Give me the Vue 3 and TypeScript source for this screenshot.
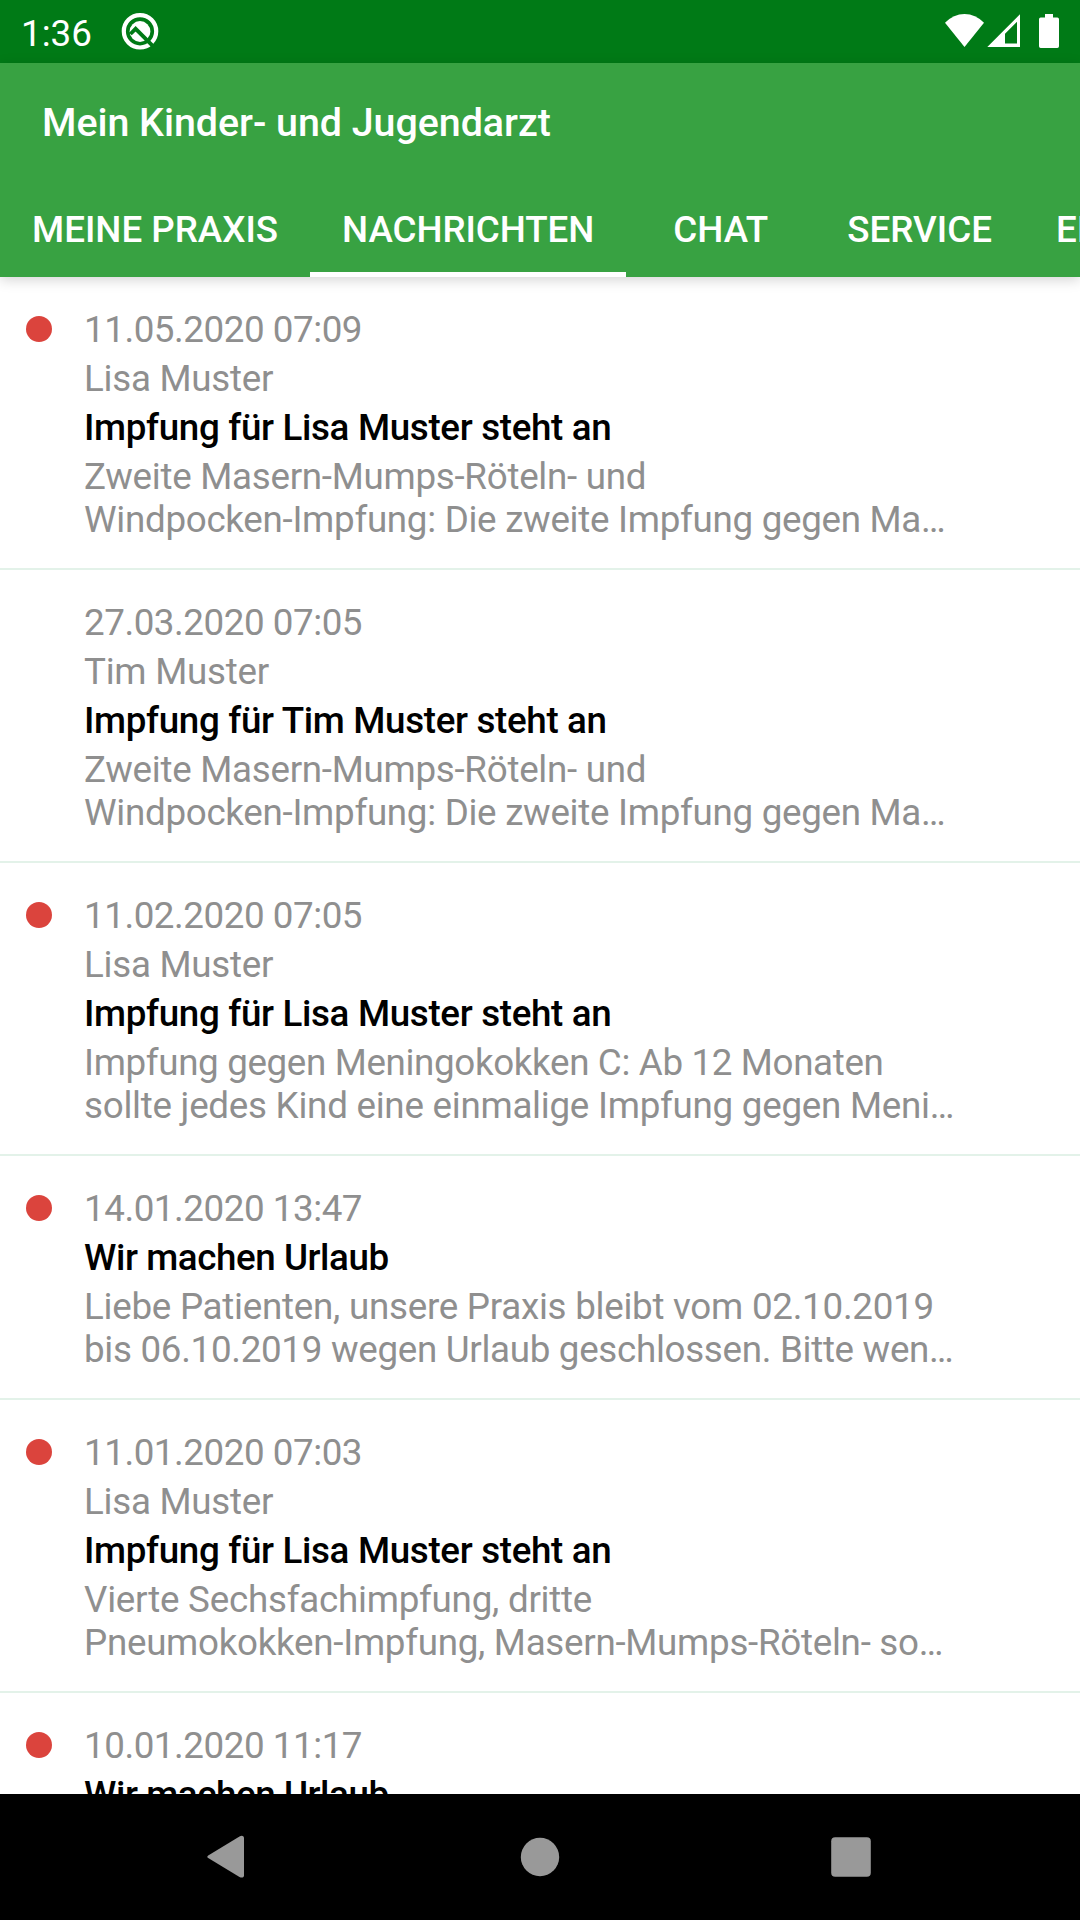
<script setup lang="ts">
interface Line {
  text: string
  tracking: number
}

interface Message {
  date: string
  patient?: string
  title: string
  lines: Line[]
  unread: boolean
}

const tabs: string[] = ['MEINE PRAXIS', 'NACHRICHTEN', 'CHAT', 'SERVICE', 'EINSTELLUNGEN']
const activeTab = 1

const measles: Line[] = [
  { text: 'Zweite Masern-Mumps-Röteln- und', tracking: -0.28 },
  { text: 'Windpocken-Impfung: Die zweite Impfung gegen Ma…', tracking: -0.29 },
]

const messages: Message[] = [
  {
    date: '11.05.2020 07:09',
    patient: 'Lisa Muster',
    title: 'Impfung für Lisa Muster steht an',
    lines: measles,
    unread: true,
  },
  {
    date: '27.03.2020 07:05',
    patient: 'Tim Muster',
    title: 'Impfung für Tim Muster steht an',
    lines: measles,
    unread: false,
  },
  {
    date: '11.02.2020 07:05',
    patient: 'Lisa Muster',
    title: 'Impfung für Lisa Muster steht an',
    lines: [
      { text: 'Impfung gegen Meningokokken C: Ab 12 Monaten', tracking: -0.35 },
      { text: 'sollte jedes Kind eine einmalige Impfung gegen Meni…', tracking: -0.26 },
    ],
    unread: true,
  },
  {
    date: '14.01.2020 13:47',
    title: 'Wir machen Urlaub',
    lines: [
      { text: 'Liebe Patienten, unsere Praxis bleibt vom 02.10.2019', tracking: -0.26 },
      { text: 'bis 06.10.2019 wegen Urlaub geschlossen. Bitte wen…', tracking: -0.3 },
    ],
    unread: true,
  },
  {
    date: '11.01.2020 07:03',
    patient: 'Lisa Muster',
    title: 'Impfung für Lisa Muster steht an',
    lines: [
      { text: 'Vierte Sechsfachimpfung, dritte', tracking: -0.24 },
      { text: 'Pneumokokken-Impfung, Masern-Mumps-Röteln- so…', tracking: -0.28 },
    ],
    unread: true,
  },
  {
    date: '10.01.2020 11:17',
    title: 'Wir machen Urlaub',
    lines: [],
    unread: true,
  },
]
</script>

<template>
  <div class="screen">
    <div class="status">
      <span class="clock">1:36</span>
      <svg class="q-icon" width="40" height="40" viewBox="0 0 40 40">
        <circle cx="20" cy="20.3" r="16.2" fill="none" stroke="#fff" stroke-width="4.2" />
        <circle cx="20" cy="20.5" r="10.4" fill="#fff" />
        <path d="M10.4 23 15.6 17.8 34 36.2" fill="none" stroke="#007a16" stroke-width="3.8" />
      </svg>
      <svg class="indicators" width="120" height="40" viewBox="940 10 120 40">
        <path d="M945 22.8Q953.5 14 964.5 14T984 22.8L964.5 47Z" fill="#fff" />
        <path d="M987.3 47H1020V14.3ZM1005 33.7 1017 21.7V43.6H1005Z" fill="#fff" fill-rule="evenodd" />
        <path d="M1045 14h8v3.5h4.3q1.7 0 1.7 1.7v27q0 1.8-1.7 1.8h-16.6q-1.7 0-1.7-1.8v-27q0-1.7 1.7-1.7h4.3z" fill="#fff" />
      </svg>
    </div>

    <header class="appbar">
      <h1>Mein Kinder- und Jugendarzt</h1>
      <nav class="tabs">
        <span v-for="(tab, i) in tabs" :key="tab" class="tab" :class="{ active: i === activeTab }">{{ tab }}</span>
      </nav>
    </header>

    <main class="list">
      <article v-for="m in messages" :key="m.date" class="message">
        <div class="marker"><i v-if="m.unread" class="dot"></i></div>
        <div class="body">
          <p class="row date">{{ m.date }}</p>
          <p v-if="m.patient" class="row patient">{{ m.patient }}</p>
          <p class="row title" :class="{ general: !m.patient }">{{ m.title }}</p>
          <p class="preview">
            <span v-for="line in m.lines" :key="line.text" :style="{ letterSpacing: line.tracking + 'px' }">{{ line.text }}</span>
          </p>
        </div>
      </article>
    </main>

    <footer class="navbar">
      <svg width="38" height="44" viewBox="0 0 38 44">
        <path d="M1.2 20.5 32.5 1.4Q34.2 .5 35.7.9 37 1.5 37 3.1V40.3Q37 42 35.7 42.5 34.2 42.9 32.5 42L1.2 23.1Q-.6 21.8 1.2 20.5Z" fill="#999" />
      </svg>
      <svg class="home" width="40" height="40" viewBox="0 0 40 40"><circle cx="20" cy="20" r="19.2" fill="#999" /></svg>
      <svg width="40" height="40" viewBox="0 0 40 40"><rect x=".2" y=".2" width="39.6" height="39.6" rx="4" fill="#999" /></svg>
    </footer>
  </div>
</template>

<style>
body {
  margin: 0;
  overflow: hidden;
}
</style>

<style scoped>
.screen {
  width: 1080px;
  height: 1920px;
  display: flex;
  flex-direction: column;
  overflow: hidden;
  background: #fff;
  font-family: Roboto, sans-serif;
  font-size: 36.75px;
}
.status {
  flex: none;
  height: 63px;
  box-sizing: border-box;
  padding: 11px 20px 0 21px;
  display: flex;
  align-items: flex-start;
  background: #007a16;
  color: #fff;
}
.clock {
  width: 99px;
  line-height: 45px;
}
.indicators {
  margin-left: auto;
  margin-top: -1px;
}
.appbar {
  flex: none;
  height: 214px;
  background: #38a242;
  color: #fff;
  position: relative;
  z-index: 1;
  box-shadow: 0 3px 12px rgba(0, 0, 0, 0.17);
}
h1 {
  margin: 0;
  height: 118px;
  padding-left: 42px;
  font-size: 39.4px;
  font-weight: 500;
  letter-spacing: -0.04px;
  line-height: 120px;
  white-space: nowrap;
}
.tabs {
  height: 96px;
  display: flex;
  overflow: hidden;
}
.tab {
  flex: none;
  box-sizing: border-box;
  height: 96px;
  min-width: 189px;
  padding: 0 32px;
  font-weight: 500;
  line-height: 97px;
  text-align: center;
  border-bottom: 5px solid transparent;
}
.tab.active {
  letter-spacing: -0.07px;
  border-bottom-color: #fff;
}
.list {
  flex: 1;
  min-height: 0;
  overflow: hidden;
}
.message {
  display: flex;
  padding: 28px 0 20px;
  border-bottom: 2px solid #e3f2e9;
  color: #8f8f8f;
}
.marker {
  flex: none;
  width: 84px;
}
.dot {
  display: block;
  width: 26px;
  height: 26px;
  margin: 11px 0 0 26px;
  border-radius: 50%;
  background: #db443d;
}
.row {
  margin: 0;
  height: 49px;
  line-height: 49px;
  white-space: nowrap;
}
.date {
  letter-spacing: -0.45px;
}
.patient {
  letter-spacing: -0.26px;
}
.title {
  color: #000;
  font-weight: 500;
  letter-spacing: -0.33px;
}
.title.general {
  letter-spacing: -0.42px;
}
.preview {
  margin: 0;
  padding-top: 3px;
  height: 93px;
}
.preview span {
  display: block;
  line-height: 43px;
  white-space: nowrap;
}
.navbar {
  flex: none;
  height: 126px;
  box-sizing: border-box;
  padding: 0 209px 0 207px;
  display: flex;
  align-items: center;
  justify-content: space-between;
  background: #000;
}
.home {
  margin-left: 4px;
}
</style>
